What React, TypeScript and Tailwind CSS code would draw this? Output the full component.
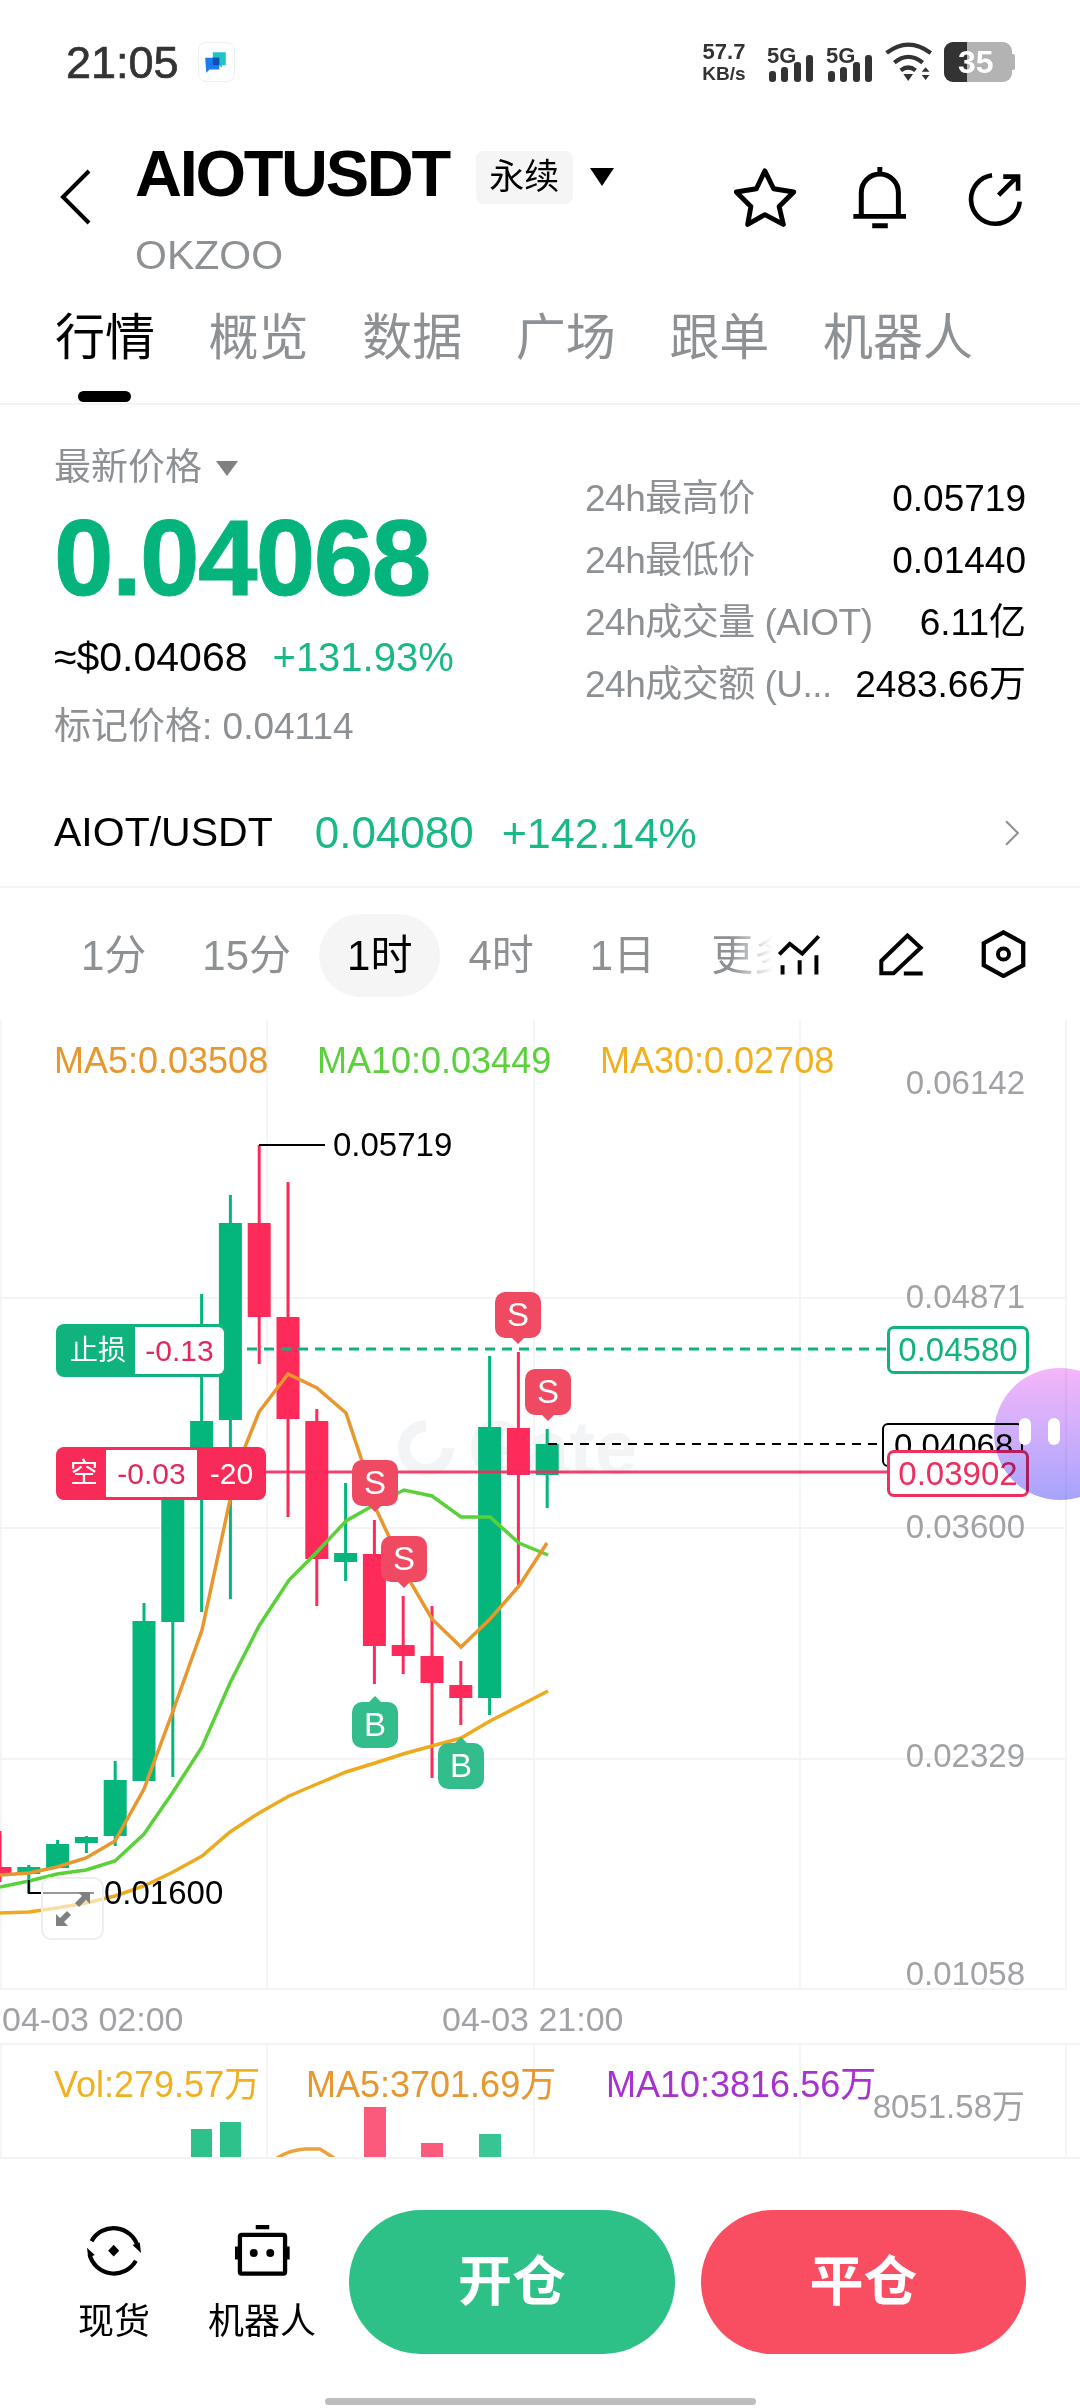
const CHART_TOP = 1020;
const GREEN = "#04b67c";
const RED = "#fe2a59";

type Candle = [number, number, number, number, "g" | "r"];

// high, body top, body bottom, low (page y), one entry per 28.8px slot
const candles: Candle[] = [
  [1831, 1867, 1875, 1882, "r"],
  [1865, 1867, 1874, 1893, "g"],
  [1840, 1844, 1868, 1868, "g"],
  [1836, 1837, 1843, 1853, "g"],
  [1761, 1780, 1836, 1846, "g"],
  [1603, 1621, 1781, 1781, "g"],
  [1490, 1490, 1622, 1777, "g"],
  [1294, 1421, 1490, 1612, "g"],
  [1195, 1223, 1420, 1599, "g"],
  [1145, 1223, 1317, 1364, "r"],
  [1182, 1317, 1419, 1517, "r"],
  [1409, 1421, 1559, 1606, "r"],
  [1483, 1553, 1562, 1581, "g"],
  [1520, 1554, 1646, 1684, "r"],
  [1596, 1645, 1656, 1674, "r"],
  [1606, 1656, 1683, 1778, "r"],
  [1661, 1685, 1698, 1725, "r"],
  [1356, 1427, 1698, 1715, "g"],
  [1352, 1428, 1475, 1585, "r"],
  [1429, 1444, 1475, 1508, "g"],
];

const ma5 = "0,1875 29,1873 57,1867 86,1858 115,1841 144,1789 173,1711 202,1630 230,1500 245,1447 259,1412 288,1374 317,1388 346,1413 361,1458 375,1507 411,1583 432,1619 461,1647 490,1619 519,1586 547,1543";
const ma10 = "0,1887 29,1881 57,1874 86,1870 115,1861 144,1834 173,1792 202,1747 230,1683 259,1626 289,1580 317,1552 346,1521 374,1505 404,1490 432,1496 461,1517 490,1517 519,1543 548,1555";
const ma30 = "0,1913 29,1912 57,1908 86,1903 115,1896 144,1886 173,1872 202,1856 230,1832 259,1813 289,1796 317,1784 346,1772 375,1763 403,1754 432,1746 461,1738 490,1721 519,1706 548,1691";

const axisLabels: [string, number][] = [
  ["0.06142", 1083],
  ["0.04871", 1297],
  ["0.03600", 1527],
  ["0.02329", 1756],
  ["0.01058", 1974],
];

// center x, body top, letter
const markers: [number, number, "S" | "B"][] = [
  [518, 1292, "S"],
  [548, 1369, "S"],
  [375, 1460, "S"],
  [404, 1536, "S"],
  [375, 1702, "B"],
  [461, 1743, "B"],
];

const volumeBars: [number, number, number, string][] = [
  [191, 2129, 21, "#2fc18c"],
  [220, 2122, 21, "#2fc18c"],
  [364, 2107, 22, "#fb5a7d"],
  [421, 2143, 22, "#fb5a7d"],
  [479, 2134, 22, "#37c593"],
];

function SignalBars() {
  return (
    <svg viewBox="0 0 44 27" className="absolute bottom-0 left-[2px] w-[44px] h-[27px]">
      <rect x="0" y="16" width="7" height="11" rx="3" fill="#333" />
      <rect x="12" y="12" width="7" height="15" rx="3" fill="#333" />
      <rect x="25" y="7" width="7" height="20" rx="3" fill="#333" />
      <rect x="37" y="0" width="7" height="27" rx="3" fill="#333" />
    </svg>
  );
}

function StatusBar() {
  return (
    <div className="h-[124px] flex items-center pl-[66px] pr-[65px]">
      <span className="text-[45px] text-[#333] leading-none [-webkit-text-stroke:0.7px_#333]">21:05</span>
      <div className="ml-[19px] w-[37px] h-[40px] rounded-[8px] border border-[#f0f0f0] flex items-center justify-center">
        <svg viewBox="0 0 24 24" className="w-[26px] h-[26px]">
          <path d="M9 3h12v12h-3l-1 2-2-2H9z" fill="#1fc4c9" />
          <path d="M2 8h13v11H6l-3 3z" fill="#1a7cf0" />
          <path d="M9 8h6v7H9z" fill="#0f4fb0" />
        </svg>
      </div>
      <div className="ml-auto flex items-center">
        <div className="w-[46px] text-center font-bold text-[#333] mr-[20px]">
          <div className="text-[22px] leading-[22px]">57.7</div>
          <div className="text-[19px] leading-[20px] mt-[1px] whitespace-nowrap">KB/s</div>
        </div>
        <div className="relative w-[59px] h-[40px]">
          <span className="absolute top-[-3px] left-0 text-[22px] font-bold text-[#333]">5G</span>
          <SignalBars />
        </div>
        <div className="relative w-[58px] h-[40px]">
          <span className="absolute top-[-3px] left-0 text-[22px] font-bold text-[#333]">5G</span>
          <SignalBars />
        </div>
        <svg viewBox="610 45 155 130" className="w-[50px] h-[42px] mr-[10px]">
          <path d="M618 82Q685 30 755 82M642 112Q685 76 730 112M662 136Q685 118 708 136" fill="none" stroke="#333" strokeWidth="13" />
          <path d="M670 147h30l-15 22zM727 140h24l-12-14zM727 150h24l-12 16z" fill="#333" />
        </svg>
        <div className="relative w-[68px] h-[40px] rounded-[9px] overflow-hidden flex bg-[#b3b3b3]">
          <div className="w-[23px] bg-[#333]" />
          <span className="absolute left-[14px] top-0 text-[32px] leading-[40px] font-bold text-white">35</span>
        </div>
        <div className="w-[3px] h-[16px] rounded-r-[2px] bg-[#b3b3b3]" />
      </div>
    </div>
  );
}

function Header() {
  return (
    <div className="h-[156px] flex pl-[60px] pr-[57px]">
      <svg viewBox="0 0 32 56" className="w-[32px] h-[56px] mt-[45px] shrink-0">
        <path d="M29 2 3 28l26 26" fill="none" stroke="#000" strokeWidth="4" />
      </svg>
      <div className="ml-[43px] pt-[14px]">
        <div className="flex items-center h-[70px]">
          <span className="text-[65px] font-bold tracking-[-2.3px] leading-none text-black">AIOTUSDT</span>
          <span className="ml-[27px] mt-[8px] w-[97px] h-[53px] rounded-[8px] bg-[#f5f5f5] flex items-center justify-center text-[35px] text-black">永续</span>
          <svg viewBox="0 0 24 18" className="ml-[17px] mt-[8px] w-[24px] h-[18px]">
            <path d="M0 0h24L12 18z" fill="#000" />
          </svg>
        </div>
        <div className="mt-[25px] text-[41px] leading-[44px] text-[#8e9194]">OKZOO</div>
      </div>
      <div className="ml-auto flex items-center h-[62px] mt-[42px]">
        <svg viewBox="48 52 194 180" className="w-[63px] h-[59px]">
          <path d="M143 60 170 115 232 125 187 170 200 225 143 195 90 225 100 170 55 125 117 115Z" fill="none" stroke="#000" strokeWidth="15" strokeLinejoin="round" />
        </svg>
        <svg viewBox="405 45 160 190" className="ml-[56px] w-[53px] h-[63px]">
          <path d="M486 48V70M430 195V125a56 56 0 0 1 112 0V195M406 197H565M463 225H510" fill="none" stroke="#000" strokeWidth="15" />
        </svg>
        <svg viewBox="742 62 170 170" className="ml-[61px] mt-[4px] w-[56px] h-[56px]">
          <path d="M818 75A74 74 0 1 0 902 155M838 135 895 78M852 79H897V122" fill="none" stroke="#000" strokeWidth="14" />
        </svg>
      </div>
    </div>
  );
}

function Tabs() {
  const tabs = ["行情", "概览", "数据", "广场", "跟单", "机器人"];
  return (
    <div className="h-[125px] border-b-2 border-[#f3f3f3] flex pl-[55px] gap-[53.6px] pt-[33px]">
      {tabs.map((t, i) => (
        <div key={t} className={`relative h-[50px] text-[50px] leading-[50px] ${i === 0 ? "text-black" : "text-[#8e9194]"}`}>
          {t}
          {i === 0 && <div className="absolute left-[23px] top-[78px] w-[53px] h-[11px] rounded-full bg-black" />}
        </div>
      ))}
    </div>
  );
}

function Stats() {
  const rows: [string, string][] = [
    ["24h最高价", "0.05719"],
    ["24h最低价", "0.01440"],
    ["24h成交量 (AIOT)", "6.11亿"],
    ["24h成交额 (U...", "2483.66万"],
  ];
  return (
    <div className="h-[381px] flex justify-between pl-[54px] pr-[54px] pt-[41px]">
      <div>
        <div className="flex items-center h-[44px] text-[37px] text-[#8e9194]">
          最新价格
          <svg viewBox="0 0 22 15" className="ml-[14px] w-[22px] h-[15px]">
            <path d="M0 0h22L11 15z" fill="#808080" />
          </svg>
        </div>
        <div className="mt-[13px] h-[110px] text-[107px] leading-[110px] font-bold tracking-[-1.6px] text-[#05b47c] [-webkit-text-stroke:1px_#05b47c]">0.04068</div>
        <div className="mt-[20px] h-[48px] flex items-center leading-[48px]">
          <span className="text-[41px] text-black">≈$0.04068</span>
          <span className="ml-[25px] text-[40px] text-[#19b886]">+131.93%</span>
        </div>
        <div className="mt-[24px] h-[44px] text-[37px] leading-[44px] text-[#8e9194]">标记价格: 0.04114</div>
      </div>
      <div className="w-[441px] pt-[22px]">
        {rows.map(([label, value]) => (
          <div key={label} className="h-[62px] flex items-center justify-between text-[37px]">
            <span className="text-[#8e9194] whitespace-nowrap tracking-[-0.5px]">{label}</span>
            <span className="text-black whitespace-nowrap">{value}</span>
          </div>
        ))}
      </div>
    </div>
  );
}

function PairRow() {
  return (
    <div className="h-[102px] border-b-2 border-[#f3f3f3] flex items-center pl-[54px] pr-[60px] pb-[6px]">
      <span className="text-[41px] text-black">AIOT/USDT</span>
      <span className="ml-[42px] text-[44px] text-[#19b886]">0.04080</span>
      <span className="ml-[28px] text-[43px] text-[#19b886]">+142.14%</span>
      <svg viewBox="0 0 14 24" className="ml-auto w-[15px] h-[26px]">
        <path d="M1 1l11 11L1 23" fill="none" stroke="#8e9194" strokeWidth="2" />
      </svg>
    </div>
  );
}

function IntervalRow() {
  return (
    <div className="relative h-[132px] flex items-center pl-[81px] gap-[56px] text-[42px] text-[#8e9194] overflow-hidden pt-[2px]">
      <span>1分</span>
      <span>15分</span>
      <span className="h-[83px] leading-[83px] px-[28px] -mx-[28px] rounded-full bg-[#f5f5f5] text-black">1时</span>
      <span>4时</span>
      <span>1日</span>
      <span className="whitespace-nowrap">更多</span>
      <div className="absolute right-[54px] top-0 h-[132px] flex items-center pl-[45px] bg-[linear-gradient(90deg,rgba(255,255,255,0),#fff_42px)]">
        <svg viewBox="50 30 140 135" className="w-[46px] h-[45px]">
          <path d="M60 97 92 65 130 95 180 42M70 130V158M122 115V158M173 100V158" fill="none" stroke="#000" strokeWidth="12" />
        </svg>
        <svg viewBox="355 28 145 135" className="ml-[55px] w-[48px] h-[45px]">
          <path d="M447 38 487 75 405 152H368V115ZM436 153H493" fill="none" stroke="#000" strokeWidth="12" />
        </svg>
        <svg viewBox="665 28 136 146" className="ml-[56px] w-[45px] h-[48px]">
          <path d="M733 35 793 68V135L733 168 673 135V68Z" fill="none" stroke="#000" strokeWidth="13" />
          <circle cx="733" cy="101" r="17" fill="none" stroke="#000" strokeWidth="12" />
        </svg>
      </div>
    </div>
  );
}

function ChartDrawing() {
  return (
    <svg viewBox={`0 ${CHART_TOP} 1080 1137`} className="absolute inset-0 w-[1080px] h-[1137px]">
      {[1, 267, 534, 800, 1066].map((x) => (
        <line key={x} x1={x} x2={x} y1={CHART_TOP} y2={1989} stroke="#f5f5f6" strokeWidth="2" />
      ))}
      {[1298, 1528, 1759, 1989].map((y) => (
        <line key={y} x1={0} x2={1066} y1={y} y2={y} stroke="#f4f4f5" strokeWidth="2" />
      ))}
      <line x1={0} x2={1080} y1={2044} y2={2044} stroke="#f4f4f5" strokeWidth="2" />
      {[1, 267, 534, 800, 1066].map((x) => (
        <line key={x} x1={x} x2={x} y1={2045} y2={2157} stroke="#f5f5f6" strokeWidth="2" />
      ))}
      {candles.map(([high, top, bottom, low, c], i) => {
        const x = i * 28.8;
        const fill = c === "g" ? GREEN : RED;
        return (
          <g key={i}>
            <line x1={x} x2={x} y1={high} y2={low} stroke={fill} strokeWidth="3" />
            <rect x={x - 11.5} y={top} width="23" height={bottom - top} fill={fill} />
          </g>
        );
      })}
      {volumeBars.map(([x, y, w, fill]) => (
        <rect key={x} x={x} y={y} width={w} height={2157 - y} fill={fill} />
      ))}
      <path d="M277 2158 Q290 2150 305 2149 L320 2149 L334 2158" fill="none" stroke="#e8a33c" strokeWidth="3.5" />
      <polyline points={ma30} fill="none" stroke="#eeaa1e" strokeWidth="3.5" />
      <polyline points={ma10} fill="none" stroke="#5ad13a" strokeWidth="3.5" />
      <polyline points={ma5} fill="none" stroke="#e8962e" strokeWidth="3.5" />
      <path d="M259 1145H325" stroke="#000" strokeWidth="2" fill="none" />
      <path d="M28.800 1880V1893H94" stroke="#000" strokeWidth="2" fill="none" />
      <line x1={247} x2={886} y1={1349} y2={1349} stroke="#10b27e" strokeWidth="3" strokeDasharray="10 7" />
      <line x1={548} x2={882} y1={1444} y2={1444} stroke="#000" strokeWidth="2" strokeDasharray="9 7" />
      <line x1={266} x2={888} y1={1472} y2={1472} stroke="#ee2e5e" strokeWidth="3" strokeOpacity="0.9" />
    </svg>
  );
}

function Marker({ x, top, letter }: { x: number; top: number; letter: "S" | "B" }) {
  const sell = letter === "S";
  return (
    <div
      className={`absolute w-[46px] h-[46px] rounded-[10px] flex items-center justify-center text-[33px] text-white ${sell ? "bg-[#ef4a62]" : "bg-[#33bd8c]"}`}
      style={{ left: x - 23, top: top - CHART_TOP }}
    >
      {letter}
      <div
        className={`absolute left-[17px] w-0 h-0 border-x-[6px] border-x-transparent ${sell ? "top-[46px] border-t-[6px] border-t-[#ef4a62]" : "top-[-6px] border-b-[6px] border-b-[#33bd8c]"}`}
      />
    </div>
  );
}

function Chart() {
  return (
    <div className="relative h-[1137px] overflow-hidden">
      {/* watermark */}
      <div className="absolute left-[398px] top-[398px] flex items-center text-[#f3f4f6]">
        <div className="w-[56px] h-[56px] rounded-full border-[12px] border-[#f3f4f6] border-r-transparent -rotate-45" />
        <span className="ml-[14px] text-[76px] leading-[60px] font-bold">Gate</span>
      </div>
      <ChartDrawing />

      <div className="absolute left-[54px] top-[19px] text-[36px] leading-[44px] text-[#e8962e]">MA5:0.03508</div>
      <div className="absolute left-[317px] top-[19px] text-[36px] leading-[44px] text-[#5ad13a]">MA10:0.03449</div>
      <div className="absolute left-[600px] top-[19px] text-[36px] leading-[44px] text-[#f2b01e]">MA30:0.02708</div>

      {axisLabels.map(([t, y]) => (
        <div key={t} className="absolute right-[55px] text-[33px] leading-[40px] text-[#a0a2a5]" style={{ top: y - CHART_TOP - 20 }}>
          {t}
        </div>
      ))}

      <div className="absolute left-[333px] top-[105px] text-[33px] leading-[40px] text-black">0.05719</div>
      <div className="absolute left-[104px] top-[853px] text-[33px] leading-[40px] text-black">0.01600</div>

      <div className="absolute left-[56px] top-[304px] w-[171px] h-[53px] rounded-[8px] bg-[#10b27e] flex items-center p-[3px]">
        <span className="w-[76px] pl-[11px] text-[28px] text-white">止损</span>
        <span className="flex-1 h-full rounded-r-[6px] bg-white flex items-center justify-center text-[30px] text-[#e0285c]">-0.13</span>
      </div>
      <div className="absolute left-[56px] top-[427px] w-[210px] h-[53px] rounded-[8px] bg-[#f72a58] flex items-center py-[3px] text-white">
        <span className="w-[50px] pl-[14px] text-[28px]">空</span>
        <span className="w-[91px] h-full bg-white flex items-center justify-center text-[30px] text-[#e0285c]">-0.03</span>
        <span className="flex-1 text-center text-[30px]">-20</span>
      </div>

      {markers.map(([x, top, l]) => (
        <Marker key={`${x}${top}`} x={x} top={top} letter={l} />
      ))}

      <div className="absolute left-[41px] top-[857px] w-[63px] h-[63px] rounded-[10px] border-2 border-[#eeeeee] bg-white/60 flex items-center justify-center">
        <svg viewBox="0 0 40 40" className="w-[40px] h-[40px]">
          <path d="M25 3h12v12l-4-4-7 7-4-4 7-7zM15 37H3V25l4 4 7-7 4 4-7 7z" fill="#808080" />
        </svg>
      </div>

      <div className="absolute left-[882px] top-[403px] w-[141px] h-[44px] rounded-[6px] border-2 border-black bg-white pl-[10px] text-[33px] leading-[42px] text-black">0.04068</div>
      <div className="absolute left-[887px] top-[306px] w-[142px] h-[48px] rounded-[7px] border-[3px] border-[#10b27e] bg-white flex items-center justify-center text-[33px] text-[#10b27e]">0.04580</div>
      <div className="absolute left-[887px] top-[430px] w-[142px] h-[47px] rounded-[7px] border-[3px] border-[#ee2e5e] bg-white flex items-center justify-center text-[33px] text-[#ee2e5e]">0.03902</div>

      {/* floating robot bubble */}
      <div className="absolute left-[994px] top-[348px] w-[132px] h-[132px] rounded-full bg-gradient-to-b from-[#f4b6f9] to-[#a7a4fc] mix-blend-multiply" />
      <div className="absolute left-[1019px] top-[398px] w-[12px] h-[27px] rounded-full bg-white" />
      <div className="absolute left-[1048px] top-[398px] w-[12px] h-[27px] rounded-full bg-white" />

      <div className="absolute left-[54px] top-[1043px] text-[36px] leading-[44px] text-[#f2b01e] whitespace-nowrap">Vol:279.57万</div>
      <div className="absolute left-[306px] top-[1043px] text-[36px] leading-[44px] text-[#e8962e] whitespace-nowrap">MA5:3701.69万</div>
      <div className="absolute left-[606px] top-[1043px] text-[36px] leading-[44px] text-[#a832d0] whitespace-nowrap">MA10:3816.56万</div>
      <div className="absolute right-[55px] top-[1067px] text-[33px] leading-[40px] text-[#a0a2a5] whitespace-nowrap">8051.58万</div>

      <div className="absolute left-[2px] top-[979px] text-[34px] leading-[40px] text-[#a0a2a5]">04-03 02:00</div>
      <div className="absolute left-[442px] top-[979px] text-[34px] leading-[40px] text-[#a0a2a5]">04-03 21:00</div>
    </div>
  );
}

function BottomBar() {
  return (
    <div className="h-[251px] border-t-2 border-[#f3f3f3] bg-white">
      <div className="flex pl-[70px] pt-[51px]">
        <div className="w-[88px] flex flex-col items-center pt-[12px]">
          <svg viewBox="45 30 175 170" className="w-[57px] h-[56px]">
            <path d="M62 88A77 77 0 0 1 204 105M198 148A77 77 0 0 1 56 128" fill="none" stroke="#000" strokeWidth="13" />
            <path d="M188 100l26 24-4-32zM72 130l-24-22 4 30z" fill="#000" />
            <path d="M130 99l17 18-17 18-17-18z" fill="#000" />
          </svg>
          <span className="mt-[24px] text-[36px] leading-[40px] text-black whitespace-nowrap">现货</span>
        </div>
        <div className="ml-[51px] w-[106px] flex flex-col items-center pt-[12px]">
          <svg viewBox="490 36 170 160" className="w-[56px] h-[56px]">
            <rect x="508" y="70" width="137" height="118" rx="5" fill="none" stroke="#000" strokeWidth="13" />
            <path d="M556 40h41v13h-41zM493 105h9v40h-9zM650 105h9v40h-9z" fill="#000" />
            <circle cx="550" cy="125" r="12" fill="#000" />
            <circle cx="600" cy="125" r="12" fill="#000" />
          </svg>
          <span className="mt-[24px] text-[36px] leading-[40px] text-black whitespace-nowrap">机器人</span>
        </div>
        <button className="ml-[34px] w-[326px] h-[144px] rounded-full bg-[#2dc188] text-white text-[54px] font-bold">开仓</button>
        <button className="ml-[26px] w-[325px] h-[144px] rounded-full bg-[#f94d62] text-white text-[54px] font-bold">平仓</button>
      </div>
      <div className="mx-auto mt-[44px] w-[431px] h-[7px] rounded-full bg-[#bdbdbd]" />
    </div>
  );
}

export default function App() {
  return (
    <div className="relative w-[1080px] h-[2408px] overflow-hidden bg-white font-['Liberation_Sans','Noto_Sans_CJK_SC',sans-serif]">
      <StatusBar />
      <Header />
      <Tabs />
      <Stats />
      <PairRow />
      <IntervalRow />
      <Chart />
      <BottomBar />
    </div>
  );
}
